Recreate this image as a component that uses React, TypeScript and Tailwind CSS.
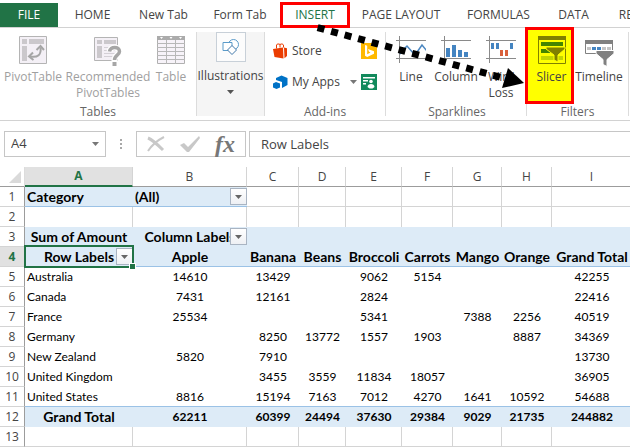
import type { ReactNode } from "react";
import clsx from "clsx";

const TABS = [
  { label: "HOME", width: "w-[69px]" },
  { label: "New Tab", width: "w-[73px]" },
  { label: "Form Tab", width: "w-[80px]" },
  { label: "INSERT", width: "w-[70px]" },
  { label: "PAGE LAYOUT", width: "w-[102px]" },
  { label: "FORMULAS", width: "w-[93px]" },
  { label: "DATA", width: "w-[57px]" },
  { label: "REVIEW", width: "w-[76px]" },
];

const COLUMNS = [
  { name: "A", width: "w-[108px]" },
  { name: "B", width: "w-[114px]" },
  { name: "C", width: "w-[52px]" },
  { name: "D", width: "w-[47px]" },
  { name: "E", width: "w-[56px]" },
  { name: "F", width: "w-[51px]" },
  { name: "G", width: "w-[49px]" },
  { name: "H", width: "w-[50px]" },
  { name: "I", width: "w-[80px]" },
];

const ROWS: string[][] = [
  ["Category", "(All)", "", "", "", "", "", "", ""],
  ["", "", "", "", "", "", "", "", ""],
  ["Sum of Amount", "Column Labels", "", "", "", "", "", "", ""],
  ["Row Labels", "Apple", "Banana", "Beans", "Broccoli", "Carrots", "Mango", "Orange", "Grand Total"],
  ["Australia", "14610", "13429", "", "9062", "5154", "", "", "42255"],
  ["Canada", "7431", "12161", "", "2824", "", "", "", "22416"],
  ["France", "25534", "", "", "5341", "", "7388", "2256", "40519"],
  ["Germany", "", "8250", "13772", "1557", "1903", "", "8887", "34369"],
  ["New Zealand", "5820", "7910", "", "", "", "", "", "13730"],
  ["United Kingdom", "", "3455", "3559", "11834", "18057", "", "", "36905"],
  ["United States", "8816", "15194", "7163", "7012", "4270", "1641", "10592", "54688"],
  ["Grand Total", "62211", "60399", "24494", "37630", "29384", "9029", "21735", "244882"],
  ["", "", "", "", "", "", "", "", ""],
];

function Caret({ className }: { className?: string }) {
  return (
    <svg viewBox="0 0 7 4" className={clsx("h-1 w-[7px] shrink-0", className)} fill="currentColor">
      <path d="M0 0h7L3.5 4z" />
    </svg>
  );
}

function PivotTableIcon() {
  return (
    <svg viewBox="0 0 28 28" className="h-7 w-7">
      <path d="M.5.5h27v27H.5z" fill="#f4f0f6" stroke="#b4b4b4" />
      <path d="M3 3h5v5H3zM10 3h15v5H10zM3 10h5v15H3z" fill="#cbc8cc" />
      <path d="M11 20.500c8 1.500 11.500-2 10.500-9" fill="none" stroke="#a6a6a6" strokeWidth="2" />
      <path d="M17.500 14 21.500 10l3.500 4M14 16.500l-4 4 4.500 3.500" fill="none" stroke="#a6a6a6" strokeWidth="2" />
    </svg>
  );
}

function RecommendedIcon() {
  return (
    <svg viewBox="0 0 28 28" className="h-7 w-7 overflow-visible">
      <path d="M.5 1.500h23v23H.5z" fill="#f4f0f6" stroke="#b4b4b4" />
      <path d="M3 4h5v4H3zM10 4h12v4H10zM3 10h5v12H3z" fill="#cbc8cc" />
      <path d="M10 11.500h11M10 14.500h11M10 17.500h11M10 20.500h11" stroke="#d4d0d6" />
      <path d="M15.500 15.500c.5-5.500 10-5.500 10 0 0 4-5 3.500-5 8.500v6" fill="none" stroke="#fff" strokeWidth="6" />
      <path d="M15.500 15.500c.5-5.500 10-5.500 10 0 0 4-5 3.500-5 8.500" fill="none" stroke="#a6a6a6" strokeWidth="3.500" />
      <path d="M18.500 26h4v4h-4z" fill="#a6a6a6" />
    </svg>
  );
}

function TableIcon() {
  return (
    <svg viewBox="0 0 28 28" className="h-7 w-7">
      <path d="M.5.5h27v27H.5z" fill="#f7f3f9" stroke="#b0b0b0" />
      <path d="M0 0h28v4H0z" fill="#ababab" />
      <path d="M3 1h3L4.500 3zM12.500 1h3L14 3zM22 1h3l-1.500 2z" fill="#fff" />
      <path d="M0 7.500h28M0 11.500h28M0 15.500h28M0 19.500h28M0 23.500h28M9.500 4v24M18.500 4v24" stroke="#b8b8b8" />
    </svg>
  );
}

function ShapesIcon() {
  return (
    <svg viewBox="0 0 18 16" className="h-4 w-[18px]" fill="#fff" stroke="#5b9bc9">
      <circle cx="11.500" cy="5.500" r="5" />
      <path d="M1 3.500h9v8H1z" />
      <path d="M10 6.500 14.500 11 10 15.500 5.500 11z" stroke="#3f76a8" />
    </svg>
  );
}

function StoreIcon() {
  return (
    <svg viewBox="0 0 15 16" className="h-4 w-[15px]" fill="#eb3c00">
      <path d="M3.500 5.500V2c0-1 2.500-1.500 3.500-.5v3M7 1.500c1.500-1 3-.5 3.500.5v2.500" fill="none" stroke="#eb3c00" />
      <path d="M0 6l10-1.500.5 11L1.500 14zM11 4.500l3 .8V13l-2.500 2.300z" />
    </svg>
  );
}

function AppsIcon() {
  return (
    <svg viewBox="0 0 15 15" className="h-[15px] w-[15px]" fill="#0072c6">
      <path d="M3 3 8.500.5l6 2.500v7L9 13V7L3 5z" />
      <path d="M0 8.500 3 7l4 1.500v4L3.500 14 0 12.500z" />
    </svg>
  );
}

function BingIcon() {
  return (
    <svg viewBox="0 0 16 16" className="h-4 w-4">
      <path d="M0 0h16v16H0z" fill="#ffb900" />
      <path d="M4 2l2.200.8v8.500L9.500 9.500 8 8.700 7 6l6 2.300v2.500L6.200 14 4 12.700z" fill="#fff" />
    </svg>
  );
}

function PeopleGraphIcon() {
  return (
    <svg viewBox="0 0 16 16" className="h-4 w-4">
      <path d="M0 0h16v16H0z" fill="#128a5c" />
      <path d="M2 3h12v1.500H2zM2 6h5v1.500H2zM2 9h3v1.500H2z" fill="#fff" />
      <circle cx="10" cy="7.500" r="1.800" fill="#fff" />
      <path d="M6.500 13c0-4 7-4 7 0l-2 1.500h-3z" fill="#fff" />
    </svg>
  );
}

function SparkIcon({ kind }: { kind: "line" | "column" | "winloss" }) {
  return (
    <svg viewBox="0 0 30 28" className="h-7 w-[30px]">
      <path d="M0 4.500h30M0 22.500h30M3.500 0v27" stroke="#8a8a8a" />
      {kind === "line" && (
        <path d="M4 18l3-4 4-4 8 9 7-10 5 6" fill="none" stroke="#4a86c0" strokeWidth="1.500" />
      )}
      {kind === "column" && (
        <path d="M5 12h4v9H5zM11 9h4v12h-4zM17 14h4v7h-4zM23 16h4v5h-4z" fill="#4484c1" />
      )}
      {kind === "winloss" && (
        <>
          <path d="M5 7h3v6H5zM10 7h3v6h-3zM24 7h3v6h-3z" fill="#4484c1" />
          <path d="M14 14h3v6h-3zM19 14h3v6h-3z" fill="#d9603b" />
        </>
      )}
    </svg>
  );
}

function SlicerIcon() {
  return (
    <svg viewBox="0 0 28 28" className="h-7 w-7">
      <path d="M.5.5h27v27H.5z" fill="none" stroke="#808000" />
      <path d="M0 0h28v4H0z" fill="#808000" />
      <path d="M3 6h22v4H3zM3 13h11v4H3z" fill="#458500" />
      <path d="M3 20h22v4H3z" fill="#c3d500" />
      <path d="M8 11h19v2l-7 6v7l-4-2v-5l-8-6z" fill="#808000" stroke="#ffff00" />
    </svg>
  );
}

function TimelineIcon() {
  return (
    <svg viewBox="0 0 28 28" className="h-7 w-7 overflow-visible">
      <path d="M.5 4.500h27v13H.5z" fill="#fff" stroke="#808080" />
      <path d="M0 4h28v4H0z" fill="#808080" />
      <path d="M2 11h4v3H2zM17 11h4v3h-4zM22 11h4v3h-4z" fill="#c4c4c4" />
      <path d="M7 11h4v3H7zM12 11h4v3h-4z" fill="#4484c1" />
      <path d="M11 14.500h18v3l-7 6v7l-4-2v-5l-7-6z" fill="#808080" stroke="#fff" />
    </svg>
  );
}

interface RibbonButtonProps {
  icon: ReactNode;
  label: ReactNode;
  className?: string;
}

function RibbonButton({ icon, label, className }: RibbonButtonProps) {
  return (
    <button className={clsx("flex shrink-0 flex-col items-center gap-[5px] leading-4 whitespace-nowrap", className)}>
      {icon}
      <span>{label}</span>
    </button>
  );
}

interface RibbonGroupProps {
  title: string;
  className?: string;
  children: ReactNode;
}

function RibbonGroup({ title, className, children }: RibbonGroupProps) {
  return (
    <section className={clsx("flex shrink-0 flex-col", className)}>
      <div className="flex h-[76px]">{children}</div>
      <h2 className="text-center leading-4 text-[#666666]">{title}</h2>
    </section>
  );
}

function Separator() {
  return <div className="my-1 w-px shrink-0 bg-[#dcdcdc]" />;
}

function Ribbon() {
  return (
    <div className="flex h-[93px] border-b border-[#d2d2d2]">
      <RibbonGroup title="Tables" className="w-[196px] text-[#a0a0a0]">
        <RibbonButton icon={<PivotTableIcon />} label="PivotTable" className="w-[66px] pt-2" />
        <RibbonButton icon={<RecommendedIcon />} label={<>Recommended<br />PivotTables</>} className="w-[84px] pt-2" />
        <RibbonButton icon={<TableIcon />} label="Table" className="w-[42px] pt-2" />
      </RibbonGroup>
      <Separator />
      <button className="my-1 flex w-[67px] shrink-0 flex-col items-center bg-[#f5f5f5] leading-4">
        <span className="flex h-[30px] w-[30px] items-center justify-center border border-[#c8d0d8] bg-[#fcfcfc]">
          <ShapesIcon />
        </span>
        <span className="mt-1.5">Illustrations</span>
        <Caret className="mt-1.5 text-[#555555]" />
      </button>
      <Separator />
      <RibbonGroup title="Add-ins" className="w-[120px]">
        <div className="flex w-full justify-between pt-[15px] pr-2 pl-2">
          <div className="flex flex-col gap-[15px]">
            <button className="flex items-center gap-1 leading-4">
              <StoreIcon />
              Store
            </button>
            <button className="flex items-center gap-1 leading-4">
              <AppsIcon />
              My Apps
              <Caret className="ml-1.5 text-[#777777]" />
            </button>
          </div>
          <div className="flex flex-col gap-[15px]">
            <button aria-label="Bing Maps" className="h-4"><BingIcon /></button>
            <button aria-label="People Graph" className="h-4"><PeopleGraphIcon /></button>
          </div>
        </div>
      </RibbonGroup>
      <Separator />
      <RibbonGroup title="Sparklines" className="w-[140px] pl-0.5">
        <RibbonButton icon={<SparkIcon kind="line" />} label="Line" className="w-[46px] pt-2" />
        <RibbonButton icon={<SparkIcon kind="column" />} label="Column" className="w-11 pt-2" />
        <RibbonButton icon={<SparkIcon kind="winloss" />} label={<>Win/<br />Loss</>} className="w-[46px] pt-2" />
      </RibbonGroup>
      <Separator />
      <RibbonGroup title="Filters" className="w-[101px]">
        <RibbonButton
          icon={<SlicerIcon />}
          label="Slicer"
          className="relative -mt-px -ml-0.5 w-[49px] border-3 border-[#ff0000] bg-[#ffff00] pt-1.5 pl-1"
        />
        <RibbonButton icon={<TimelineIcon />} label="Timeline" className="w-[50px] pt-2" />
      </RibbonGroup>
      <Separator />
    </div>
  );
}

function CalloutArrow() {
  return (
    <svg viewBox="0 0 212 72" className="pointer-events-none absolute top-5 left-[315px] h-[72px] w-[212px]">
      <path d="M2.600 7.600 190 58.500" stroke="#000" strokeWidth="7" strokeDasharray="7 7" />
      <path d="M209 63 193 48 187 68z" />
    </svg>
  );
}

function FormulaBar() {
  return (
    <div className="flex h-[46px] items-start pt-2.5 pl-1 text-[13px] text-[#444444]">
      <div className="flex h-[26px] w-[102px] shrink-0 items-center border border-[#c6c6c6] pr-1.5 pl-1.5">
        <input aria-label="Name box" defaultValue="A4" className="w-full min-w-0 outline-none" />
        <button aria-label="Named ranges"><Caret className="text-[#777777]" /></button>
      </div>
      <svg viewBox="0 0 30 26" className="h-[26px] w-[30px] shrink-0" fill="#a8a8a8">
        <path d="M14 8h2v2h-2zM14 12h2v2h-2zM14 16h2v2h-2z" />
      </svg>
      <div className="flex h-[26px] w-[110px] shrink-0 items-center justify-between border border-[#c6c6c6] px-2.5">
        <button aria-label="Cancel">
          <svg viewBox="0 0 18 16" className="h-4 w-[18px]" fill="none" stroke="#c8c8c8">
            <path d="M1 2c5 2 10 7 15 12" strokeWidth="3" />
            <path d="M17 1C11 4 5 9 1 15" strokeWidth="2" />
          </svg>
        </button>
        <button aria-label="Enter">
          <svg viewBox="0 0 20 16" className="h-4 w-5" fill="#c8c8c8">
            <path d="M0 9l4-2 4 4L19 0l1 2L9 16H7z" />
          </svg>
        </button>
        <button aria-label="Insert function" className="font-['Liberation_Serif',serif] text-2xl leading-5 font-bold text-[#777777] italic">
          fx
        </button>
      </div>
      <input
        aria-label="Formula"
        defaultValue="Row Labels"
        className="ml-[3px] h-[26px] min-w-0 flex-1 border border-r-0 border-[#c6c6c6] px-[11px] outline-none"
      />
    </div>
  );
}

function FilterButton({ label }: { label: string }) {
  return (
    <button
      aria-label={label}
      className="absolute top-px right-0 flex h-[17px] w-[17px] items-center justify-center border border-[#a9b4c2] bg-gradient-to-b from-white to-[#eef0f4]"
    >
      <Caret className="text-[#666666]" />
    </button>
  );
}

function Cell({ row, col, value }: { row: number; col: number; value: string }) {
  const shaded = row === 3 || row === 4 || row === 12 || (row === 1 && col < 2);
  const plain = row === 2 || row === 13 || (row === 1 && col > 1);
  const blueLine = row === 4 || row === 11 || (row === 1 && col < 2);
  const left = row === 1 || (col === 0 && row > 4 && row < 12);
  const heading = row < 5 || (row === 12 && col === 0);
  const selected = row === 4 && col === 0;

  return (
    <td
      className={clsx(
        "relative h-5 p-0 leading-4 whitespace-nowrap",
        left ? "pl-0.5 text-left" : "text-center",
        heading && "text-[14px]",
        shaded && "bg-[#ddebf7] font-bold",
        plain && "border-r border-[#d4d4d4]",
        blueLine && "border-b border-b-[#9bc2e6]",
        plain && row !== 2 && "border-b border-b-[#d4d4d4]",
        selected && "z-10"
      )}
    >
      {value}
      {selected && <FilterButton label="Filter row labels" />}
      {row === 1 && col === 1 && <FilterButton label="Filter category" />}
      {row === 3 && col === 1 && <FilterButton label="Filter column labels" />}
      {selected && (
        <div className="pointer-events-none absolute -inset-x-px -top-0.5 -bottom-0.5 border-2 border-[#217346]">
          <div className="absolute -right-[3px] -bottom-[3px] h-[5px] w-[5px] bg-[#217346] outline outline-white" />
        </div>
      )}
    </td>
  );
}

function Sheet() {
  return (
    <table className="w-[632px] table-fixed border-separate border-spacing-0 font-[Lato,sans-serif] text-xs leading-4 text-black">
      <thead>
        <tr className="font-['Open_Sans',sans-serif] text-[#444444]">
          <th className="h-5 w-[25px] border-r border-b border-r-[#dcdcdc] border-b-[#9c9c9c] p-0">
            <svg viewBox="0 0 12 12" className="ml-[9px] h-3 w-3" fill="#dadada">
              <path d="M12 0v12H0z" />
            </svg>
          </th>
          {COLUMNS.map((c) => (
            <th
              key={c.name}
              scope="col"
              className={clsx(
                "h-5 border-r border-b border-r-[#d4d4d4] p-0",
                c.width,
                c.name === "A"
                  ? "border-b-2 border-b-[#217346] bg-[#e1e1e1] font-bold text-[#217346]"
                  : "border-b-[#9c9c9c] font-normal"
              )}
            >
              {c.name}
            </th>
          ))}
        </tr>
      </thead>
      <tbody>
        {ROWS.map((cells, i) => (
          <tr key={i}>
            <th
              scope="row"
              className={clsx(
                "h-5 border-r border-b border-r-[#9c9c9c] border-b-[#d4d4d4] p-0 text-center font-['Open_Sans',sans-serif]",
                i === 3 ? "bg-[#e1e1e1] font-bold text-[#217346]" : "font-normal text-[#444444]"
              )}
            >
              {i + 1}
            </th>
            {cells.map((value, j) => (
              <Cell key={j} row={i + 1} col={j} value={value} />
            ))}
          </tr>
        ))}
      </tbody>
    </table>
  );
}

export default function App() {
  return (
    <div className="relative overflow-hidden bg-white font-['Open_Sans',sans-serif] text-xs text-[#444444]">
      <nav className="flex h-7 border-b border-[#d2d2d2] pt-[3px]">
        <button className="w-[58px] shrink-0 bg-[#217346] text-white">FILE</button>
        {TABS.map((tab) => (
          <button
            key={tab.label}
            className={clsx(
              "relative shrink-0 whitespace-nowrap",
              tab.width,
              tab.label === "INSERT" && "text-[#217346]"
            )}
          >
            {tab.label}
            {tab.label === "INSERT" && (
              <span className="absolute inset-x-0 -top-px -bottom-px border-3 border-[#ff0000]" />
            )}
          </button>
        ))}
      </nav>
      <Ribbon />
      <FormulaBar />
      <Sheet />
      <CalloutArrow />
    </div>
  );
}
